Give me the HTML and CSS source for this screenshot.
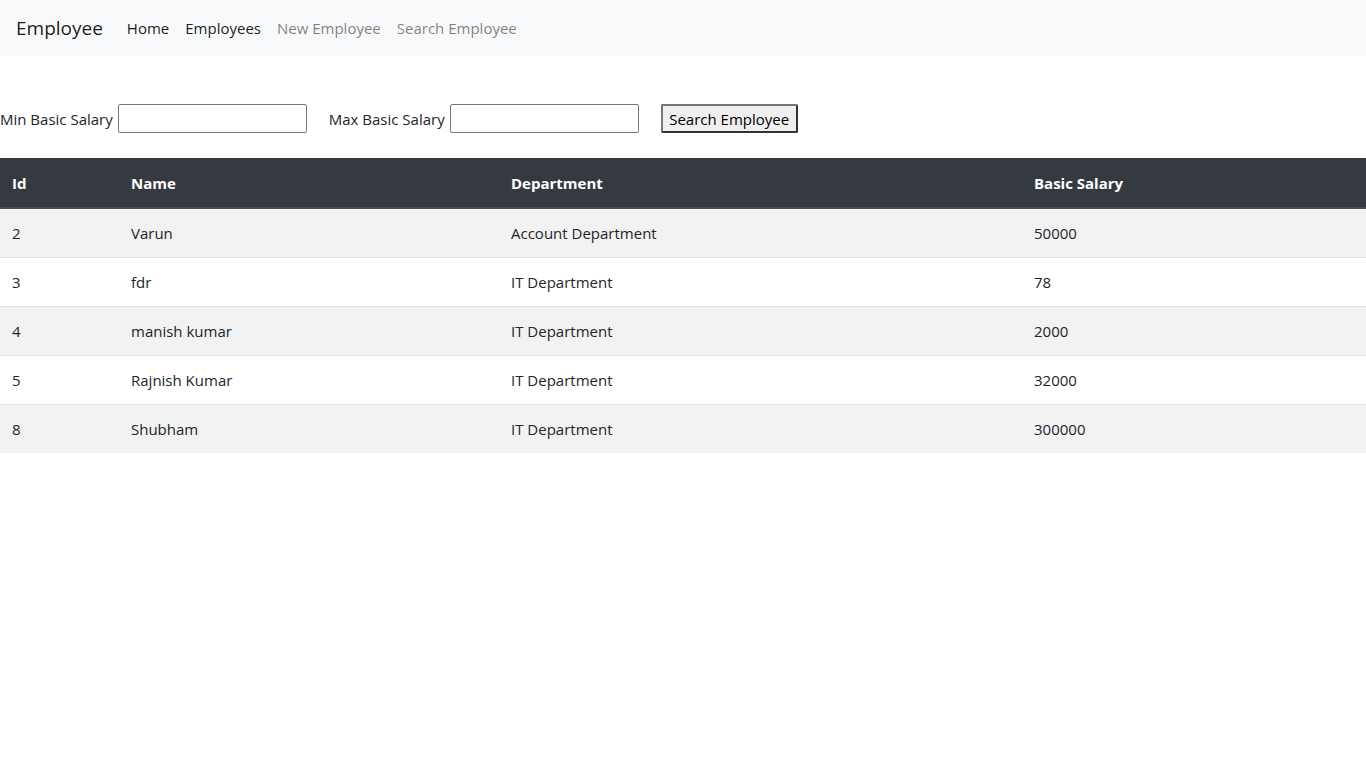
FILE: index.html
```html
<!DOCTYPE html>
<html>
<head>
<meta charset="utf-8">
<title>Employee</title>
<link rel="stylesheet" href="styles.css">
</head>
<body>
<nav class="navbar">
  <a class="brand" href="#">Employee</a>
  <ul class="nav">
    <li><a class="nav-link active" href="#">Home</a></li>
    <li><a class="nav-link active" href="#">Employees</a></li>
    <li><a class="nav-link" href="#">New Employee</a></li>
    <li><a class="nav-link" href="#">Search Employee</a></li>
  </ul>
</nav>
<form class="search-form">
  <label class="field">Min Basic Salary <input type="text" class="inp"></label>
  <label class="field">Max Basic Salary <input type="text" class="inp"></label>
  <button type="button" class="btn">Search Employee</button>
</form>
<table class="table">
  <colgroup>
    <col class="c1"><col class="c2"><col class="c3"><col class="c4">
  </colgroup>
  <thead>
    <tr><th>Id</th><th>Name</th><th>Department</th><th>Basic Salary</th></tr>
  </thead>
  <tbody>
    <tr><td>2</td><td>Varun</td><td>Account Department</td><td>50000</td></tr>
    <tr><td>3</td><td>fdr</td><td>IT Department</td><td>78</td></tr>
    <tr><td>4</td><td>manish kumar</td><td>IT Department</td><td>2000</td></tr>
    <tr><td>5</td><td>Rajnish Kumar</td><td>IT Department</td><td>32000</td></tr>
    <tr><td>8</td><td>Shubham</td><td>IT Department</td><td>300000</td></tr>
  </tbody>
</table>
</body>
</html>
```
FILE: styles.css
```css
* { box-sizing: border-box; }
body {
  margin: 0;
  font-family: "Open Sans", "Noto Sans", sans-serif;
  font-size: 15px;
  line-height: 24px;
  color: #212529;
  background: #fff;
}
a { text-decoration: none; }
.navbar {
  height: 56px;
  background: #f8f9fa;
  display: flex;
  align-items: center;
  padding: 0 16px;
}
.brand {
  font-size: 19px;
  color: rgba(0,0,0,.9);
  margin-right: 16px;
  line-height: 30px;
}
.nav {
  list-style: none;
  margin: 0;
  padding: 0;
  display: flex;
}
.nav-link {
  display: block;
  padding: 8px 8px;
  color: rgba(0,0,0,.5);
}
.nav-link.active { color: rgba(0,0,0,.9); }
.search-form {
  margin-top: 48px;
  display: flex;
  align-items: center;
  height: 29px;
  gap: 22px;
}
.field {
  display: flex;
  align-items: center;
  gap: 5px;
}
.inp {
  width: 189px;
  height: 29px;
  border: 1px solid #767676;
  border-radius: 2px;
  padding: 1px 2px;
  font: inherit;
}
.btn {
  height: 29px;
  width: 137px;
  background: #efefef;
  border: 2px solid #333;
  border-top-color: #767676;
  border-left-color: #767676;
  border-radius: 2px;
  font: inherit;
  color: #000;
  padding: 0 6px;
}
.table {
  margin-top: 25px;
  width: 100%;
  border-collapse: collapse;
  table-layout: fixed;
}
.c1 { width: 119px; }
.c2 { width: 380px; }
.c3 { width: 523px; }
.c4 { width: 344px; }
.table th, .table td {
  padding: 12px;
  text-align: left;
  vertical-align: top;
}
.table th {
  background: #343a40;
  color: #fff;
  font-weight: 700;
  border-bottom: 2px solid #454d55;
  padding-top: 13px;
}
.table td { border-top: 1px solid #dee2e6; }
.table tbody tr:first-child td { border-top: 0; }
.table tbody tr:nth-child(odd) { background: #f2f2f2; }
```
